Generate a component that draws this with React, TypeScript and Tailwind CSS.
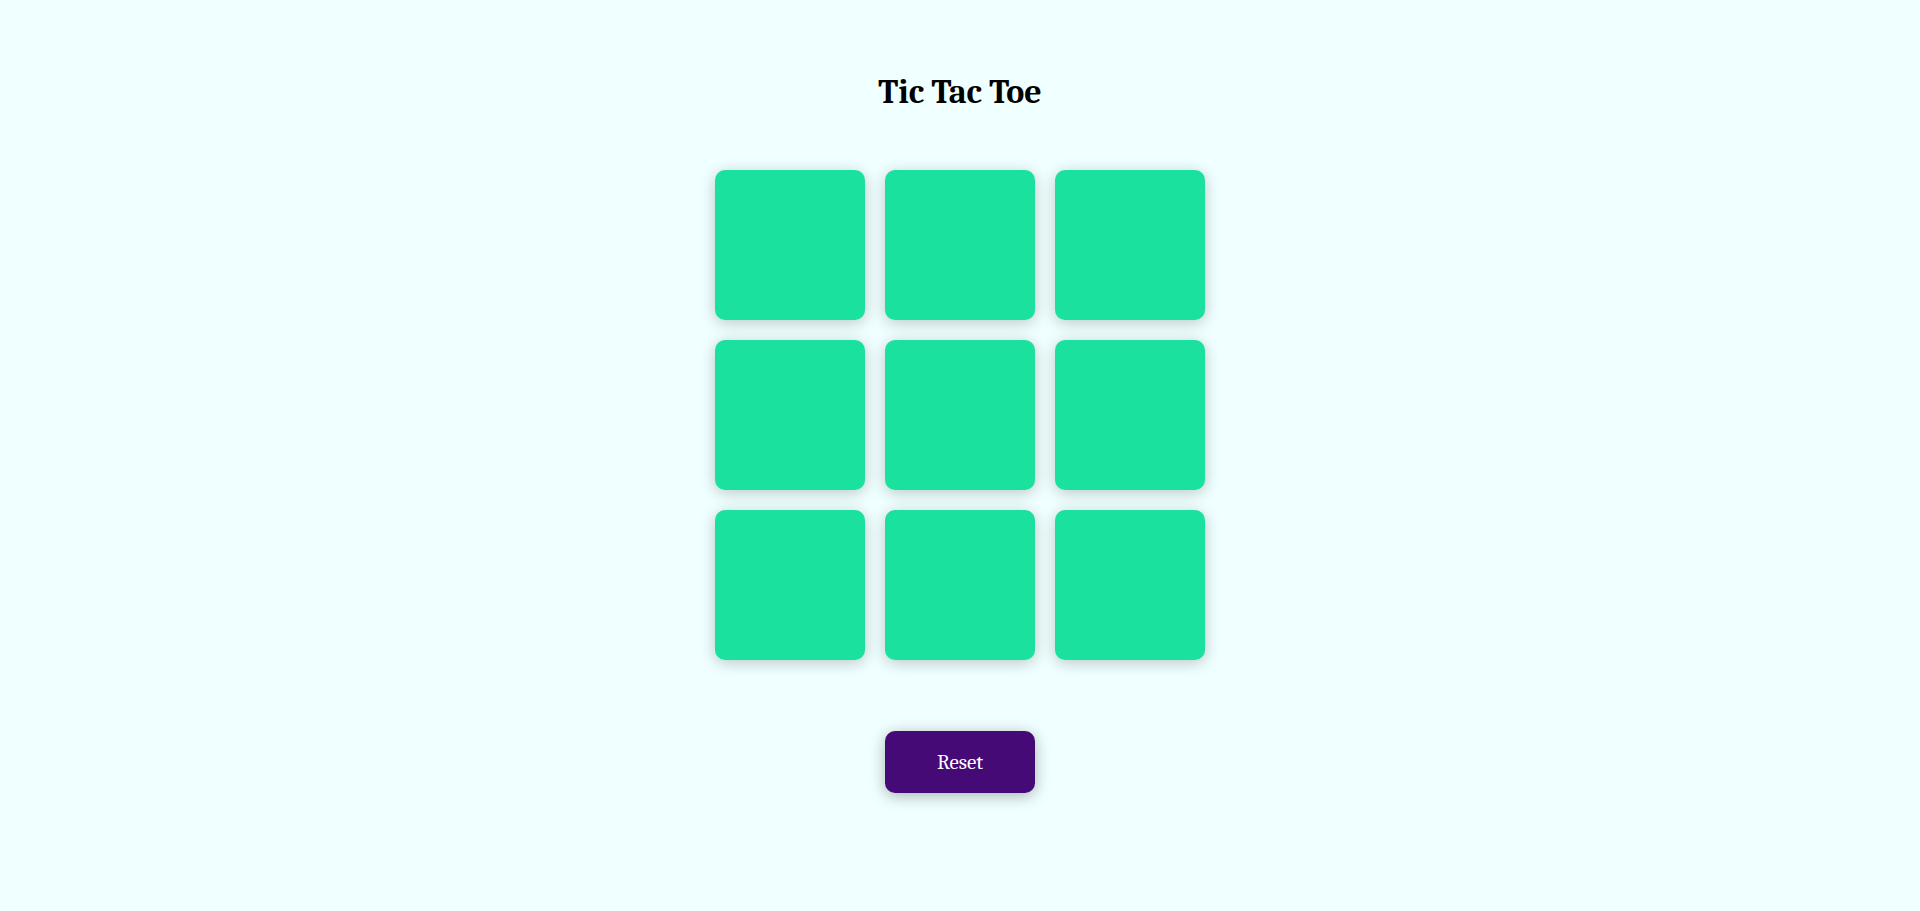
const cells = Array.from({ length: 9 }, (_, i) => i)

const App = () => {
  return (
    <div className="min-h-[911px] w-full bg-[#f0ffff] flex flex-col items-center font-['Cambria','Caladea','Liberation_Serif',serif]">
      <h1 className="mt-[73px] text-[34px] leading-[38px] font-bold text-black">Tic Tac Toe</h1>

      <div className="mt-[59px] grid grid-cols-3 gap-5">
        {cells.map((i) => (
          <button
            key={i}
            className="w-[150px] h-[150px] rounded-[10px] bg-[#1be19e] shadow-[0_3px_16px_rgba(0,0,0,0.22)]"
          />
        ))}
      </div>

      <button className="mt-[71px] w-[150px] h-[62px] rounded-[10px] bg-[#450a75] text-white text-[21px] pt-[2px] shadow-[0_3px_16px_rgba(0,0,0,0.3)]">
        Reset
      </button>
    </div>
  )
}

export default App
